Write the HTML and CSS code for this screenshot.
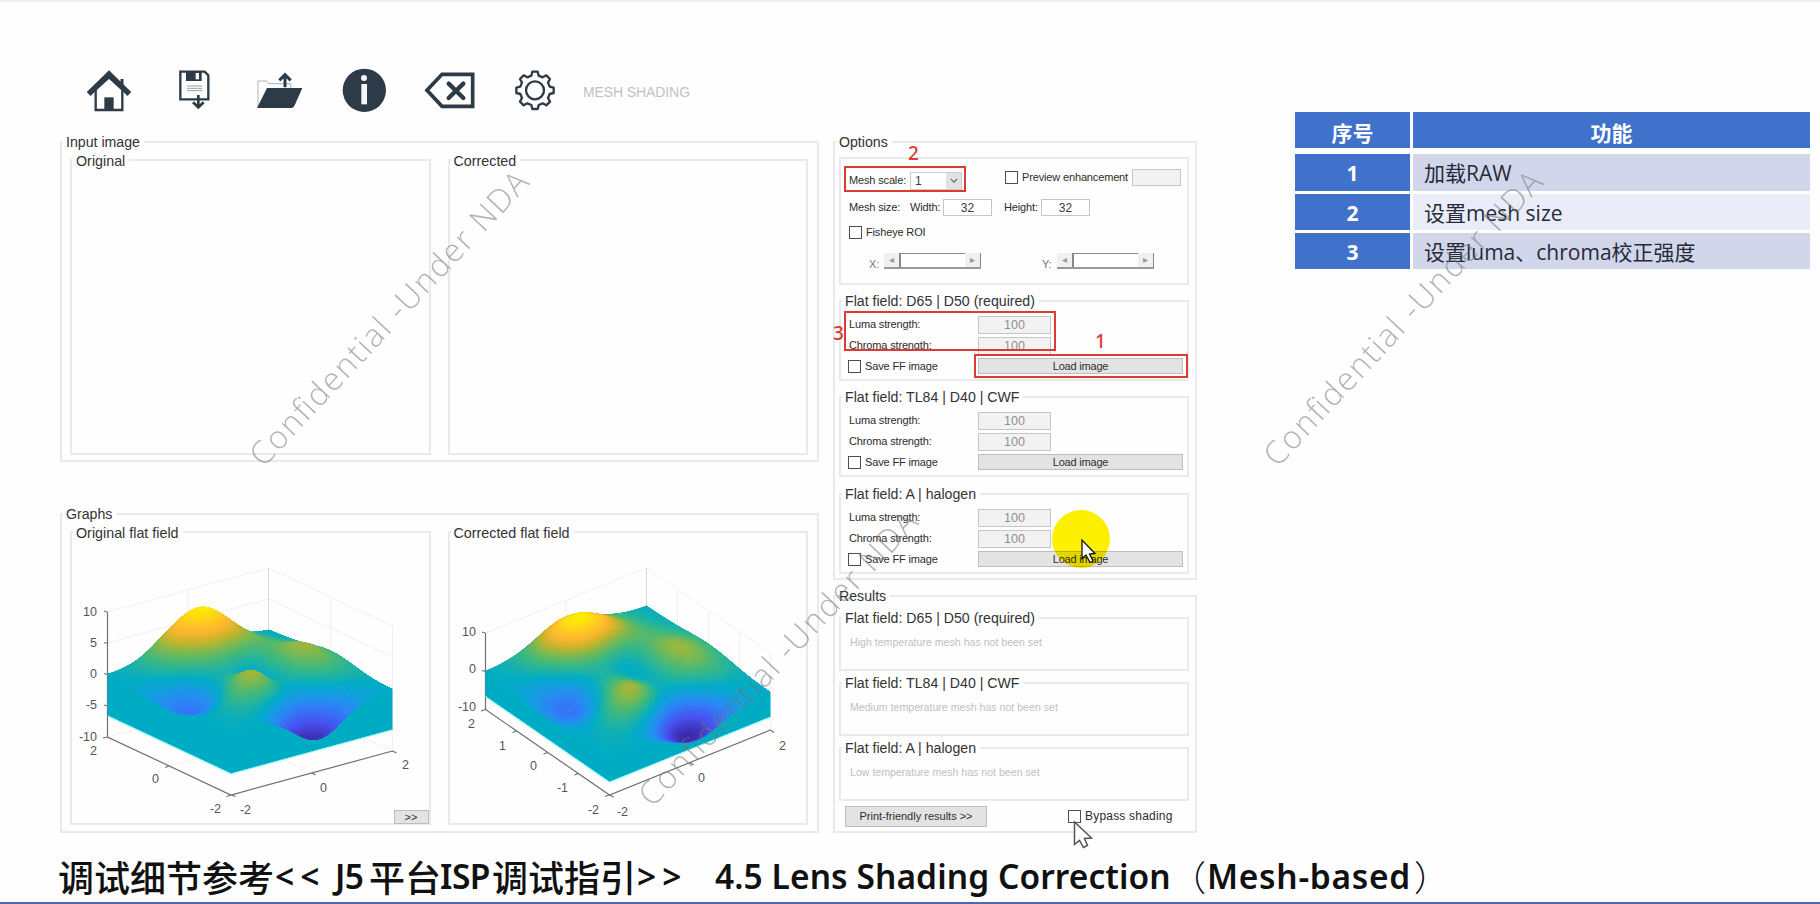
FILE: index.html
```html
<!DOCTYPE html>
<html lang="zh-CN">
<head>
<meta charset="utf-8">
<title>Mesh Shading</title>
<link rel="stylesheet" href="styles.css">
</head>
<body>
<div class="slide">
  <header class="toolbar">
    <svg class="ico ico-home" viewBox="108 60 138 126" width="46" height="42"><path d="M216 112V87" stroke-width="9"/><path d="M137 118V180H217V118L177 82Z" fill="#fff" stroke-width="7"/><path d="M163 142H191V180H163Z" fill="#2d3a47" stroke="none"/><path d="M116 132L177 72L238 132" stroke-width="16"/></svg>
    <svg class="ico ico-save" viewBox="384 60 99 120" width="33" height="40"><path d="M391 65H464L475 76V148H391Z" stroke-width="7"/><path d="M408 65H455V93H408Z" fill="#2d3a47" stroke="none"/><path d="M437 69H447V88H437Z" fill="#fff" stroke="none"/><path d="M411 108H457M411 115H457M411 122H457" stroke="#9a9fa4" stroke-width="3"/><path d="M445 135V170M429 157L445 172L461 157" stroke-width="8"/></svg>
    <svg class="ico ico-open" viewBox="618 66 144 111" width="48" height="37"><path d="M624 168V93H650L656 101H722V114" stroke="#aeb2b6" stroke-width="3"/><path d="M651 114H757L733 168Q730 174 724 174H621Z" fill="#2d3a47" stroke="none"/><path d="M705 112V76M688 91L705 74L722 91" stroke-width="9"/></svg>
    <svg class="ico ico-info" viewBox="876 54 135 135" width="45" height="45"><circle cx="943" cy="121" r="65" fill="#2d3a47" stroke="none"/><circle cx="942" cy="84" r="9" fill="#f4f6f8" stroke="none"/><path d="M934 102H951V163H934Z" fill="#f4f6f8" stroke="none"/></svg>
    <svg class="ico ico-back" viewBox="12 63 156 114" width="52" height="38"><path d="M21 121L66 73H158V169H66Z" stroke-width="11"/><path d="M86 101L130 144M130 101L86 144" stroke-width="13" stroke-linecap="round"/></svg>
    <svg class="ico ico-gear" viewBox="-63 -61 126 123" width="42" height="41"><circle r="27" stroke-width="7"/><path stroke-width="7" stroke-linejoin="round" d="M-8-56H8L11-44L23-39L34-45L45-34L39-23L44-11L56-8V8L44 11L39 23L45 34L34 45L23 39L11 44L8 56H-8L-11 44L-23 39L-34 45L-45 34L-39 23L-44 11L-56 8V-8L-44-11L-39-23L-45-34L-34-45L-23-39L-11-44Z"/></svg>
    <span class="mode">MESH SHADING</span>
  </header>

  <main class="content">
    <div class="left">
      <section class="group pair">
        <span class="legend">Input image</span>
        <div class="group"><span class="legend">Original</span></div>
        <div class="group"><span class="legend">Corrected</span></div>
      </section>
      <section class="group pair graphs">
        <span class="legend">Graphs</span>
        <div class="group plot">
          <span class="legend">Original flat field</span>
          <svg viewBox="72 533 356 290" width="356" height="290">
            <g class="grid"><path d="M107.500 612L268.500 568L392.500 626V751L268.500 693L107.500 737M188 590V715L312 773M330.500 597V722L169 766M107.500 643L268.500 599L392.500 657M107.500 674L268.500 630"/><path class="strong" d="M268.500 568V693"/></g>
            <path class="axis" d="M107.500 612V737L231 795L392.500 751M107.500 612L104 611M107.500 643.500L104 642.500M107.500 674.500L104 673.500M107.500 706L104 705M107.500 737L103 738M169 766L165 767.500M231 795L226.500 796.500M231 795L235.500 796.500M312 773L315.500 775M392.500 751L396.500 753"/>
            <g class="ticks"><text x="97" y="615.500">10</text><text x="97" y="646.500">5</text><text x="97" y="677.500">0</text><text x="97" y="709">-5</text><text x="97" y="740.500">-10</text><text x="97" y="754.500">2</text><text x="159" y="782.500">0</text><text x="221" y="812.500">-2</text><text x="251" y="813.500">-2</text><text x="327" y="791.500">0</text><text x="409" y="769">2</text></g>
          </svg>
          <canvas width="1068" height="870" data-ox="72" data-oy="533" data-l="107.5,737" data-f="231,795" data-r="392.5,751" data-k="6.26"></canvas>
          <button class="btn more">&gt;&gt;</button>
        </div>
        <div class="group plot">
          <span class="legend">Corrected flat field</span>
          <svg viewBox="450 533 356 290" width="356" height="290">
            <g class="grid"><path d="M485.500 633L646.500 568L770.500 653V730L646.500 645L485.500 709.500M566 600V677M677.500 590V666M708.500 611V687M739.500 633V709"/><path class="strong" d="M646.500 568V645"/></g>
            <path class="axis" d="M485.500 633V709.500L609.500 795L770.500 730M485.500 633L482 632M485.500 671.500L482 670.500M485.500 709.500L481 711M516.500 731L512.500 732.500M547.500 752.500L543.500 754M578.500 773.500L574.500 775M609.500 795L605 796.500M609.500 795L613.500 797M690 762.500L693.500 765M770.500 730L774 732.500"/>
            <g class="ticks"><text x="476" y="635.500">10</text><text x="476" y="672.500">0</text><text x="476" y="711">-10</text><text x="475" y="728">2</text><text x="506" y="749.500">1</text><text x="537" y="770">0</text><text x="568" y="791.500">-1</text><text x="599" y="813.500">-2</text><text x="628" y="815.500">-2</text><text x="705" y="782">0</text><text x="786" y="749.500">2</text></g>
          </svg>
          <canvas width="1068" height="870" data-ox="450" data-oy="533" data-l="485.5,709.5" data-f="609.5,795" data-r="770.5,730" data-k="3.83"></canvas>
        </div>
      </section>
    </div>

    <div class="right">
      <section class="group options">
        <span class="legend">Options</span>
        <div class="group mesh">
          <div class="row r1"><span class="lbl w61">Mesh scale:</span><span class="select">1<i><svg viewBox="0 0 10 6" width="8" height="5"><path d="M1 1L5 5L9 1" fill="none" stroke="#666" stroke-width="1.500"/></svg></i></span><i class="check m44"></i><span class="lbl w110">Preview enhancement</span><span class="field off w49 up"></span></div>
          <div class="row r2"><span class="lbl w61">Mesh size:</span><span class="lbl w33">Width:</span><span class="field w49">32</span><span class="lbl height">Height:</span><span class="field w49">32</span></div>
          <div class="row r3"><i class="check"></i><span class="lbl">Fisheye ROI</span></div>
          <div class="row r4"><span class="lbl dim w15">X:</span><span class="slider"><i>◂</i><b></b><i>▸</i></span><span class="lbl dim w15 y">Y:</span><span class="slider"><i>◂</i><b></b><i>▸</i></span></div>
        </div>
        <div class="group ff">
          <span class="legend">Flat field: D65 | D50 (required)</span>
          <span class="lbl">Luma strength:</span><span class="field off">100</span>
          <span class="lbl">Chroma strength:</span><span class="field off">100</span>
          <span class="save"><i class="check"></i><span class="lbl">Save FF image</span></span><button class="btn">Load image</button>
        </div>
        <div class="group ff">
          <span class="legend">Flat field: TL84 | D40 | CWF</span>
          <span class="lbl">Luma strength:</span><span class="field off">100</span>
          <span class="lbl">Chroma strength:</span><span class="field off">100</span>
          <span class="save"><i class="check"></i><span class="lbl">Save FF image</span></span><button class="btn">Load image</button>
        </div>
        <div class="group ff">
          <span class="legend">Flat field: A | halogen</span>
          <span class="lbl">Luma strength:</span><span class="field off">100</span>
          <span class="lbl">Chroma strength:</span><span class="field off">100</span>
          <span class="save"><i class="check"></i><span class="lbl">Save FF image</span></span><button class="btn">Load image</button>
        </div>
      </section>
      <section class="group results">
        <span class="legend">Results</span>
        <div class="group res"><span class="legend">Flat field: D65 | D50 (required)</span><span class="msg">High temperature mesh has not been set</span></div>
        <div class="group res"><span class="legend">Flat field: TL84 | D40 | CWF</span><span class="msg">Medium temperature mesh has not been set</span></div>
        <div class="group res"><span class="legend">Flat field: A | halogen</span><span class="msg">Low temperature mesh has not been set</span></div>
        <div class="foot"><button class="btn print">Print-friendly results &gt;&gt;</button><i class="check"></i><span class="lbl">Bypass shading</span></div>
      </section>
    </div>

    <table class="info">
      <tr class="head"><th>序号</th><th>功能</th></tr>
      <tr class="gap"><td colspan="2"></td></tr>
      <tr><th>1</th><td>加载RAW</td></tr>
      <tr class="alt"><th>2</th><td>设置mesh size</td></tr>
      <tr><th>3</th><td>设置luma、chroma校正强度</td></tr>
    </table>
  </main>

  <footer class="caption"><span class="c1">调试细节参考</span><span class="c2">&lt;&lt;</span><span class="c3">J5</span><span class="c4">平台</span><span class="c5">ISP</span><span class="c6">调试指引</span><span class="c7">&gt;&gt;</span><span class="c8">4.5 Lens Shading Correction</span><span class="c9">（</span><span class="c10">Mesh-based</span><span class="c9">）</span></footer>

  <div class="mark mark-scale"></div><div class="mark mark-strength"></div><div class="mark mark-load"></div>
  <span class="num num1">1</span><span class="num num2">2</span><span class="num num3">3</span>
  <div class="spot"></div>

  <svg class="overlay" viewBox="0 0 1820 904" width="1820" height="904">
    <g class="wm">
      <text transform="translate(397 326) rotate(-46.800)" textLength="390">Confidential -Under NDA</text>
      <text transform="translate(786 666) rotate(-46.800)" textLength="390">Confidential -Under NDA</text>
      <text transform="translate(1411 326) rotate(-46.800)" textLength="390">Confidential -Under NDA</text>
    </g>
    <path d="M1082 540V558.500L1086 555L1090 562.500L1093 561L1089.500 554L1095 553.500Z" fill="#fff" stroke="#111" stroke-width="1.300"/>
    <path d="M1074.500 822V844.500L1079.500 840.500L1083.500 847.500L1087.500 845.500L1084.500 838.500L1091.500 838Z" fill="#fff" stroke="#555" stroke-width="1.500"/>
  </svg>
</div>
<script src="surface.js"></script>
</body>
</html>
```
FILE: styles.css
```css
* { box-sizing: border-box; }
body { margin: 0; background: #fefefe; font-family: "Liberation Sans", Arial, sans-serif; color: #3c3c3c; }
.slide { position: relative; width: 1820px; height: 904px; overflow: hidden; border-top: 2px solid #efefef; border-bottom: 2px solid #4a69b2; background: #fefefe; }

.toolbar { display: flex; align-items: flex-start; height: 139px; padding: 66px 0 0 86px; }
.ico { flex: none; fill: none; stroke: #2d3a47; }
.ico-home { margin-top: 2px; }
.ico-save { margin: 2px 0 0 46px; }
.ico-open { margin: 4px 0 0 45px; }
.ico-info { margin-left: 38px; }
.ico-back { margin: 3px 0 0 37px; }
.ico-gear { margin: 2px 0 0 38px; }
.mode { margin: 16px 0 0 27px; font-size: 14px; line-height: 17px; color: #c2c2c2; letter-spacing: -.1px; }

.content { display: flex; align-items: flex-start; padding-left: 60px; height: 694px; }
.group { position: relative; border: 2px solid #eaeaea; }
.legend { position: absolute; top: -10px; left: 1px; padding: 0 4px 0 3px; background: #fefefe; font-size: 14.15px; line-height: 18px; white-space: nowrap; color: #333; }

.left { display: grid; gap: 51px; width: 759px; }
.pair { display: flex; gap: 17px; height: 321px; padding: 16px 9px 5px 8px; }
.graphs { height: 320px; padding-bottom: 6px; }
.pair > .group { flex: 1; }
.pair > .legend { left: 1px; }
.pair > .group > .legend { top: -9px; font-size: 14.3px; }
.plot { display: grid; }
.plot > svg, .plot > canvas { grid-area: 1 / 1; display: block; width: 356px; height: 290px; }
.grid path { fill: none; stroke: #f0f0f0; }
.grid .strong { stroke: #d8d8d8; }
.axis { fill: none; stroke: #707070; stroke-width: 1.2; }
.ticks text { font-size: 12.5px; fill: #555; text-anchor: end; }
.more { position: absolute; right: 0; bottom: -1px; width: 35px; height: 14px; line-height: 11px; }

.right { display: grid; gap: 15px; width: 364px; margin-left: 14px; }
.options { height: 439px; padding: 14px 6px 0 4px; }
.results { height: 238px; padding: 20px 6px 0 4px; }
.mesh { height: 128px; }
.row { display: flex; align-items: center; padding-left: 8px; }
.r1 { height: 25px; margin-top: 9px; }
.r2 { height: 25px; margin-top: 2px; }
.r3 { height: 24px; margin-top: 0; }
.r4 { height: 22px; margin-top: 6px; padding-left: 28px; }
.lbl { font-size: 11px; line-height: 13px; letter-spacing: -.15px; white-space: nowrap; color: #2c2c2c; }
.dim { color: #777; padding-top: 6px; }
.w61 { width: 61px; } .w110 { width: 110px; } .w33 { width: 33px; } .w15 { width: 15px; }
.y { margin-left: 61px; }
.height { width: 49px; padding-left: 12px; }
.check { flex: none; width: 13px; height: 13px; border: 1px solid #4e4e4e; margin-right: 4px; background: #fff; }
.m44 { margin-left: 43px; position: relative; top: -3px; }
.m44 ~ .lbl, .up { position: relative; top: -3px; }
.select { display: flex; justify-content: space-between; width: 52px; height: 18px; padding-left: 4px; border: 1px solid #ccc; font-size: 12px; line-height: 17px; background: #fff; }
.select i { display: grid; place-items: center; width: 15px; background: #e2e2e2; }
.field { display: block; height: 17px; border: 1px solid #c6c6c6; text-align: center; font-size: 12px; line-height: 16px; background: #fff; }
.off { background: #f2f2f2; color: #909090; }
.w49 { width: 49px; }
.slider { display: flex; width: 97px; height: 16px; border-bottom: 2px solid #999; border-right: 1px solid #888; }
.slider i { width: 15px; background: #f0f0f0; font: 10px/13px "DejaVu Sans", sans-serif; text-align: center; color: #999; }
.slider b { flex: 1; border-left: 2px solid #888; border-top: 1px solid #888; background: #fff; }
.btn { border: 1px solid #bdbdbd; background: #e3e3e3; padding: 0; font: 11px/13px "Liberation Sans", Arial, sans-serif; color: #2e2e2e; }

.ff { display: grid; grid-template-columns: 129px 73px 133px; grid-template-rows: 17px 17px 16px; row-gap: 4px; align-items: center; height: 81px; padding: 14px 0 0 8px; margin-top: 15px; }
.ff + .ff + .ff { margin-top: 16px; }
.ff .lbl { grid-column: 1; }
.ff .field { grid-column: 2; font-size: 12.5px; height: 18px; }
.ff .btn { grid-column: 2 / 4; height: 16px; margin-right: 1px; letter-spacing: -.2px; }
.save { grid-column: 1; display: flex; align-items: center; margin-left: -1px; }

.res { height: 54px; padding: 17px 0 0 9px; }
.res + .res { margin-top: 11px; }
.res + .res ~ .res { margin-top: 11px; }
.msg { display: block; font-size: 10.6px; line-height: 12px; color: #c0c0c0; }
.foot { display: flex; align-items: center; height: 21px; margin: 5px 0 0 6px; }
.foot .lbl { font-size: 12px; letter-spacing: .2px; }
.print { width: 142px; height: 21px; margin-right: 81px; }

.info { margin: -29px 0 0 98px; width: 515px; border-spacing: 0; table-layout: fixed; font-family: "Open Sans", "Noto Sans CJK SC", sans-serif; font-size: 21px; }
.info th, .info td { height: 39.3px; padding: 2px 0 0; line-height: 30px; border: solid #fff; border-width: 0 0 3px 0; }
.info th { background: #4071cb; color: #fff; font-size: 21px; }
.info .head th { padding-top: 6px; }
.info th:first-child { width: 118px; border-right: 3px solid #fff; }
.info td { background: #d2d6eb; color: #262a3a; padding-left: 11px; letter-spacing: 0; }
.info .alt td { background: #eaedf8; }
.info .gap td { height: 3px; padding: 0; border: 0; background: #fff; line-height: 0; }

.caption { display: flex; padding: 15px 0 0 58px; font: 600 33.5px/52px "Noto Sans", "Open Sans", "Noto Sans CJK SC", sans-serif; color: #111; white-space: nowrap; }
.caption span { flex: none; }
.caption .c1, .caption .c4, .caption .c6 { font: 500 36px/52px "Noto Sans CJK SC", sans-serif; }
.c1 { width: 217px; } .c2 { width: 60px; letter-spacing: 6px; } .c3 { width: 34px; letter-spacing: -.5px; } .c4 { width: 71px; } .c5 { width: 52px; letter-spacing: -.5px; } .c6 { width: 145px; } .c7 { width: 78px; letter-spacing: 6px; } .c8 { width: 456px; letter-spacing: .08px; }
.caption .c9 { width: 36px; font: 300 35px/52px "Noto Sans CJK SC", sans-serif; }
.c10 { width: 207px; letter-spacing: .7px; }

.mark { position: absolute; border: 2px solid #dc3a34; }
.mark-scale { left: 844px; top: 164px; width: 122px; height: 26px; }
.mark-strength { left: 844px; top: 309px; width: 212px; height: 40px; }
.mark-load { left: 974px; top: 352px; width: 214px; height: 24px; }
.num { position: absolute; font: 500 19px/24px "Noto Sans", sans-serif; color: #dc3a34; }
.num1 { left: 1095px; top: 327px; } .num2 { left: 908px; top: 139px; } .num3 { left: 833px; top: 319px; }
.spot { position: absolute; left: 1052px; top: 508px; width: 58px; height: 58px; border-radius: 50%; background: #fdf000; mix-blend-mode: multiply; }
.overlay { position: absolute; left: 0; top: -2px; pointer-events: none; }
.wm text { font: 300 32px "Open Sans", sans-serif; fill: #777; fill-opacity: .55; text-anchor: middle; }
```
FILE: surface.js
```js
const stops = [[0, 60, 38, 168], [.143, 70, 82, 240], [.286, 43, 132, 247], [.37, 19, 157, 224], [.447, 0, 172, 196],
  [.5, 28, 178, 165], [.571, 62, 184, 125], [.66, 125, 184, 78], [.74, 198, 180, 40], [.83, 253, 181, 46], [.91, 254, 205, 30], [1, 253, 236, 0]];

function color(z) {
  const t = Math.max(0, Math.min(1, (z + 6.55) / 14.65));
  let i = 1;
  while (i < stops.length - 1 && stops[i][0] < t) i++;
  const a = stops[i - 1], b = stops[i], f = (t - a[0]) / (b[0] - a[0]);
  return `rgb(${[1, 2, 3].map(c => Math.round(a[c] + (b[c] - a[c]) * f)).join(",")})`;
}

function height(x, y) {
  return 3 * (1 - x) ** 2 * Math.exp(-x * x - (y + 1) ** 2)
    - 10 * (x / 5 - x ** 3 - y ** 5) * Math.exp(-x * x - y * y)
    - Math.exp(-((x + 1) ** 2) - y * y) / 3;
}

for (const canvas of document.querySelectorAll("canvas")) {
  const d = canvas.dataset, g = canvas.getContext("2d");
  const [L, F, R] = [d.l, d.f, d.r].map(s => s.split(",").map(Number));
  const k = Number(d.k), N = 200, floor = -6.6, S = 3;
  const at = (u, v, z) => [
    S * (F[0] + u * (R[0] - F[0]) + v * (L[0] - F[0]) - d.ox),
    S * (F[1] + u * (R[1] - F[1]) + v * (L[1] - F[1]) - (z + 10) * k - d.oy)];
  const zAt = (u, v) => height(4 * u - 2, 4 * v - 2);
  const trace = pts => { g.beginPath(); pts.forEach(p => g.lineTo(p[0], p[1])); };

  for (let i = N - 1; i >= 0; i--) for (let j = N - 1; j >= 0; j--) {
    const c = [[i, j], [i + 1, j], [i + 1, j + 1], [i, j + 1]].map(([a, b]) => at(a / N, b / N, zAt(a / N, b / N)));
    trace(c);
    g.closePath();
    g.fillStyle = g.strokeStyle = color(zAt((i + .5) / N, (j + .5) / N));
    g.lineWidth = 1;
    g.fill();
    g.stroke();
  }

  const rim = [];
  for (let j = N; j >= 0; j--) rim.push(at(0, j / N, zAt(0, j / N)));
  for (let i = 1; i <= N; i++) rim.push(at(i / N, 0, zAt(i / N, 0)));
  trace([...rim, at(1, 0, floor), at(0, 0, floor), at(0, 1, floor)]);
  g.closePath();
  g.fillStyle = "rgb(0,172,196)";
  g.fill();
  trace([at(0, 1, floor), at(0, 0, floor), at(1, 0, floor)]);
  g.strokeStyle = "rgba(120,250,255,.8)";
  g.lineWidth = 3.5;
  g.stroke();
}
```
